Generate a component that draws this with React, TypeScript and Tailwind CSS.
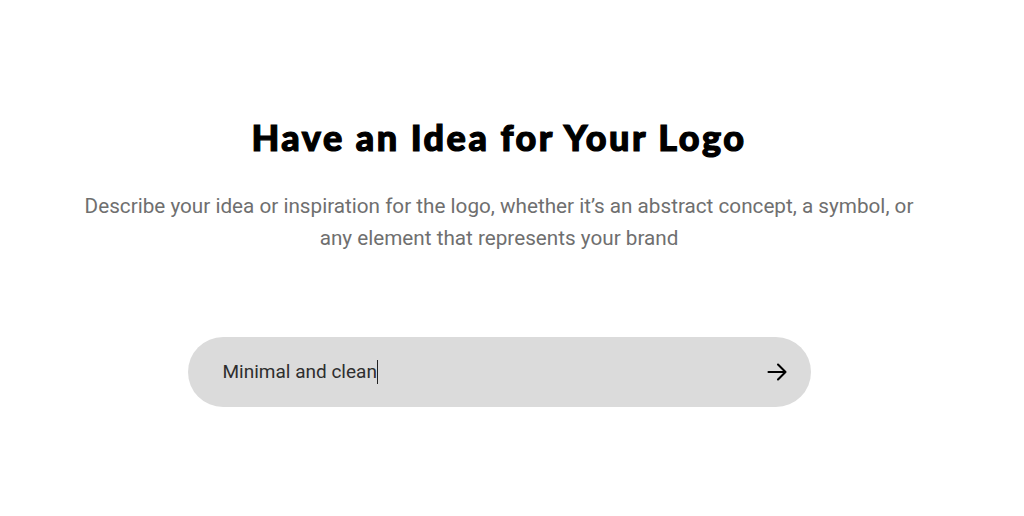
import { useState } from "react";

export default function App() {
  const [idea] = useState("Minimal and clean");

  return (
    <div className="min-h-screen w-full bg-white flex flex-col items-center pt-[115px] pr-[26px] font-['Roboto',sans-serif]">
      {/* Heading */}
      <h1 className="font-['Lato',sans-serif] font-black text-[36px] leading-[44px] tracking-[2.5px] text-black [-webkit-text-stroke:1.2px_black]">
        Have an Idea for Your Logo
      </h1>

      {/* Description */}
      <p className="mt-[31px] w-[850px] text-center text-[20.7px] leading-[32px] text-[#6f6f6f]">
        Describe your idea or inspiration for the logo, whether it’s an abstract concept, a symbol, or any element that represents your brand
      </p>

      {/* Prompt input */}
      <div className="mt-[83px] w-[623px] h-[70px] rounded-full bg-[#dbdbdb] flex items-center pl-[35px] pr-[24px]">
        <div className="flex-1 flex items-center text-[19px] text-[#2e2e2e]">
          <span>{idea}</span>
          <span className="w-px h-[24px] bg-[#222]" />
        </div>
        <button className="flex items-center justify-center text-black" aria-label="Submit">
          <svg width="20" height="20" viewBox="0 0 20 20" fill="none" stroke="currentColor" strokeWidth={2.1} strokeLinecap="round" strokeLinejoin="round">
            <path d="M1.5 10h17M11 2.5l7.5 7.5-7.5 7.5" />
          </svg>
        </button>
      </div>
    </div>
  );
}
